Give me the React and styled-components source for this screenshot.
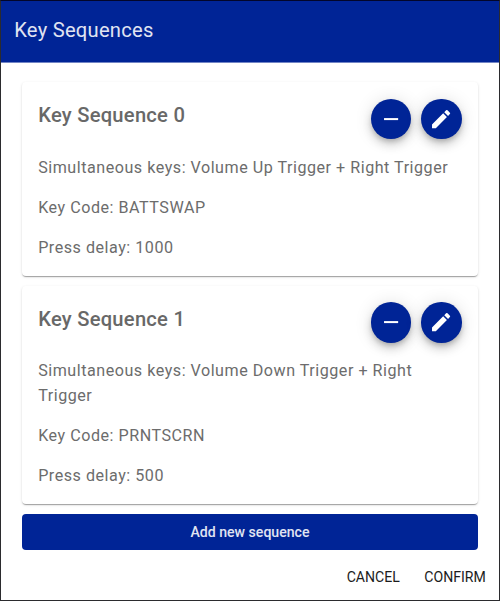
import React from "react";
import styled, { createGlobalStyle } from "styled-components";

const GlobalStyle = createGlobalStyle`
  * { box-sizing: border-box; }
  body { margin: 0; background: #fff; }
`;

const Dialog = styled.main`
  display: flex;
  flex-direction: column;
  width: 500px;
  height: 601px;
  border: 1px solid #2b2b2e;
  border-top-color: #02062a;
  background: #fff;
  font-family: Roboto, sans-serif;
  overflow: hidden;
`;

const Header = styled.header`
  display: flex;
  align-items: center;
  flex: none;
  height: 62px;
  padding: 0 13.2px 3px;
  border-bottom: 1px solid #7285c5;
  background: #002496;
`;

const Heading = styled.h1`
  margin: 0;
  color: #e0e4f2;
  font-size: 20.16px;
  font-weight: 400;
  line-height: 32px;
  letter-spacing: 0.25px;
`;

const Content = styled.section`
  display: flex;
  flex-direction: column;
  gap: 10px;
  padding: 19.4px 21px 0;
`;

const Card = styled.article`
  height: ${(p) => p.$height}px;
  padding: 16.3px 16.4px 16px 16.2px;
  border-radius: 4px;
  background: #fff;
  color: #6c6c6c;
  box-shadow: 0 2px 1px -1px rgba(0, 0, 0, 0.2),
    0 1px 1px rgba(0, 0, 0, 0.14), 0 1px 3px rgba(0, 0, 0, 0.12);
`;

const CardHeader = styled.div`
  display: flex;
  justify-content: space-between;
  height: 56.3px;
`;

const CardTitle = styled.h2`
  margin: 0;
  padding-top: 0.4px;
  color: #686868;
  font-size: 20.16px;
  font-weight: 500;
  line-height: 32.3px;
  letter-spacing: 0.25px;
`;

const Actions = styled.div`
  display: flex;
  gap: 10.1px;
`;

const RoundButton = styled.button`
  display: grid;
  place-items: center;
  width: 40.3px;
  height: 40.3px;
  padding: 0;
  border: 0;
  border-radius: 50%;
  background: #002496;
  color: #fff;
  box-shadow: 0 3px 5px -1px rgba(0, 0, 0, 0.2),
    0 6px 10px rgba(0, 0, 0, 0.14), 0 1px 18px rgba(0, 0, 0, 0.12);
`;

const Icon = styled.svg`
  display: block;
  width: 24.2px;
  height: 24.2px;
  fill: currentColor;
`;

const Detail = styled.p`
  margin: 0 0 16.1px;
  font-size: 16.13px;
  line-height: 24.2px;
  letter-spacing: 0.518px;
`;

const Details = styled.div`
  padding-top: 0.7px;
`;

const AddButton = styled.button`
  height: 36.4px;
  padding: 0 0 1.2px;
  border: 0;
  border-radius: 4px;
  background: #002496;
  color: #e0e4f2;
  font: 500 14.1px Roboto, sans-serif;
`;

const Footer = styled.footer`
  display: flex;
  justify-content: flex-end;
  gap: 24.4px;
  padding: 16.5px 13.2px 0;
`;

const TextButton = styled.button`
  padding: 0;
  border: 0;
  background: none;
  color: #1c1c1c;
  font: 400 14.1px/20px Roboto, sans-serif;
`;

const sequences = [
  { keys: "Volume Up Trigger + Right Trigger", code: "BATTSWAP", delay: 1000, height: 193.7 },
  { keys: "Volume Down Trigger + Right Trigger", code: "PRNTSCRN", delay: 500, height: 217.9 },
];

function SequenceCard({ index, sequence }) {
  return (
    <Card $height={sequence.height}>
      <CardHeader>
        <CardTitle>{`Key Sequence ${index}`}</CardTitle>
        <Actions>
          <RoundButton aria-label="Remove">
            <Icon viewBox="0 0 24 24"><path d="M19 13H5v-2h14v2z" /></Icon>
          </RoundButton>
          <RoundButton aria-label="Edit">
            <Icon viewBox="0 0 24 24">
              <path d="M3 17.25V21h3.75L17.81 9.94l-3.75-3.75L3 17.25zM20.71 7.04a.996.996 0 0 0 0-1.41l-2.34-2.34a.996.996 0 0 0-1.41 0l-1.83 1.83 3.75 3.75 1.83-1.83z" />
            </Icon>
          </RoundButton>
        </Actions>
      </CardHeader>
      <Details>
        <Detail>{`Simultaneous keys: ${sequence.keys}`}</Detail>
        <Detail>{`Key Code: ${sequence.code}`}</Detail>
        <Detail>{`Press delay: ${sequence.delay}`}</Detail>
      </Details>
    </Card>
  );
}

export default function App() {
  return (
    <>
      <GlobalStyle />
      <Dialog>
        <Header><Heading>Key Sequences</Heading></Header>
        <Content>
          {sequences.map((sequence, index) => (
            <SequenceCard key={sequence.code} index={index} sequence={sequence} />
          ))}
          <AddButton>Add new sequence</AddButton>
        </Content>
        <Footer>
          <TextButton>CANCEL</TextButton>
          <TextButton>CONFIRM</TextButton>
        </Footer>
      </Dialog>
    </>
  );
}
